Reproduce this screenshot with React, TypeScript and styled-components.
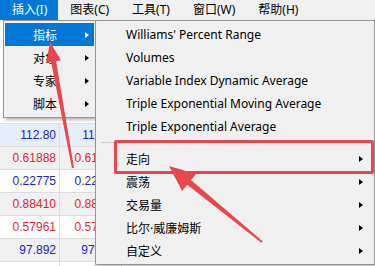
import React from "react";
import styled, { createGlobalStyle } from "styled-components";

const GlobalStyle = createGlobalStyle`
  html, body { margin: 0; padding: 0; background: #ffffff; }
  body { overflow: hidden; }
  * { box-sizing: border-box; }
`;

const UI_FONT = `"Noto Sans", "Noto Sans CJK SC", sans-serif`;

const Page = styled.div`
  position: relative;
  width: 375px;
  height: 266px;
  overflow: hidden;
  font-family: ${UI_FONT};
  font-size: 12px;
  color: #000;
  background: #fff;
`;

const MenuBar = styled.div`
  display: flex;
  height: 20px;
  background: #f0f0f0;
`;

const BarItem = styled.div<{ $active?: boolean }>`
  display: flex;
  align-items: center;
  padding: 0 11px 0 12px;
  height: 20px;
  line-height: 20px;
  white-space: nowrap;
  background: ${(p) => (p.$active ? "#0078d7" : "transparent")};
  color: ${(p) => (p.$active ? "#fff" : "#000")};
`;

const Body = styled.div`
  display: flex;
  flex-direction: column;
`;

const ChartArea = styled.div`
  height: 103px;
  background: #fff;
`;

const Row = styled.div<{ $bg: string }>`
  display: grid;
  grid-template-columns: 60px 62px 1fr;
  height: 23px;
  background: ${(p) => p.$bg};
  border-top: 1px solid #dcdcdc;
`;

const Cell = styled.div<{ $color: string }>`
  display: flex;
  align-items: center;
  justify-content: flex-end;
  padding-right: 3px;
  border-right: 1px solid #dcdcdc;
  font-family: "Liberation Sans", sans-serif;
  font-size: 12px;
  color: ${(p) => p.$color};
`;

const Menu = styled.div<{ $left: number; $width: number }>`
  position: absolute;
  top: 20px;
  left: ${(p) => p.$left}px;
  width: ${(p) => p.$width}px;
  padding: 2px 1px;
  background: #f0f0f0;
  border: 1px solid #979797;
  box-shadow: 2px 2px 3px rgba(0, 0, 0, 0.28);
  display: flex;
  flex-direction: column;
`;

const MenuItem = styled.div<{ $active?: boolean; $pad: number; $arrowPad: number }>`
  display: flex;
  align-items: center;
  justify-content: space-between;
  height: 23px;
  padding: 0 ${(p) => p.$arrowPad}px 0 ${(p) => p.$pad}px;
  white-space: nowrap;
  background: ${(p) => (p.$active ? "#0078d7" : "transparent")};
  color: ${(p) => (p.$active ? "#fff" : "#000")};
`;

const Tri = styled.span<{ $white?: boolean }>`
  width: 0;
  height: 0;
  border-top: 3.5px solid transparent;
  border-bottom: 3.5px solid transparent;
  border-left: 4px solid ${(p) => (p.$white ? "#fff" : "#000")};
`;

const Separator = styled.div`
  height: 9px;
  display: flex;
  align-items: center;
  padding: 0 2px 0 4px;
  &::after {
    content: "";
    flex: 1;
    height: 1px;
    background: #c9c9c9;
  }
`;

const Highlight = styled.div`
  position: absolute;
  left: 114px;
  top: 140px;
  width: 260px;
  height: 34px;
  border: 3px solid #e8474d;
  border-radius: 2px;
  pointer-events: none;
`;

const Overlay = styled.svg`
  position: absolute;
  left: 0;
  top: 0;
  pointer-events: none;
`;

type Pt = [number, number];

function arrowPoints(tail: Pt, tip: Pt, headLen: number, headW: number, w0: number, w1: number) {
  const dx = tip[0] - tail[0];
  const dy = tip[1] - tail[1];
  const len = Math.hypot(dx, dy);
  const ux = dx / len;
  const uy = dy / len;
  const nx = -uy;
  const ny = ux;
  const bx = tip[0] - ux * headLen;
  const by = tip[1] - uy * headLen;
  const pts: Pt[] = [
    [tail[0] + (nx * w0) / 2, tail[1] + (ny * w0) / 2],
    [bx + (nx * w1) / 2, by + (ny * w1) / 2],
    [bx + (nx * headW) / 2, by + (ny * headW) / 2],
    tip,
    [bx - (nx * headW) / 2, by - (ny * headW) / 2],
    [bx - (nx * w1) / 2, by - (ny * w1) / 2],
    [tail[0] - (nx * w0) / 2, tail[1] - (ny * w0) / 2],
  ];
  return pts.map((p) => `${p[0].toFixed(1)},${p[1].toFixed(1)}`).join(" ");
}

const rows = [
  { v: "112.80", c: "#2222c4", bg: "#e5effa" },
  { v: "0.61888", c: "#e0272b", bg: "#f0f0f0" },
  { v: "0.22775", c: "#2222c4", bg: "#ffffff" },
  { v: "0.88410", c: "#e0272b", bg: "#f0f0f0" },
  { v: "0.57961", c: "#e0272b", bg: "#ffffff" },
  { v: "97.892", c: "#2222c4", bg: "#f0f0f0" },
  { v: "1.07688", c: "#e0272b", bg: "#ffffff" },
];

const topMenu = ["插入(I)", "图表(C)", "工具(T)", "窗口(W)", "帮助(H)"];
const firstMenu = ["指标", "对象", "专家", "脚本"];
const indicators = [
  "Williams' Percent Range",
  "Volumes",
  "Variable Index Dynamic Average",
  "Triple Exponential Moving Average",
  "Triple Exponential Average",
];
const groups = ["走向", "震荡", "交易量", "比尔·威廉姆斯", "自定义"];

export default function App() {
  return (
    <Page>
      <GlobalStyle />
      <MenuBar>
        {topMenu.map((t, i) => (
          <BarItem key={t} $active={i === 0}>
            {t}
          </BarItem>
        ))}
      </MenuBar>
      <Body>
        <ChartArea />
        {rows.map((r) => (
          <Row key={r.v} $bg={r.bg}>
            <Cell $color={r.c}>{r.v}</Cell>
            <Cell $color={r.c}>{r.v}</Cell>
          </Row>
        ))}
      </Body>

      <Menu $left={3} $width={93}>
        {firstMenu.map((t, i) => (
          <MenuItem key={t} $active={i === 0} $pad={28} $arrowPad={5}>
            <span>{t}</span>
            <Tri $white={i === 0} />
          </MenuItem>
        ))}
      </Menu>

      <Menu $left={95} $width={280}>
        {indicators.map((t) => (
          <MenuItem key={t} $pad={29} $arrowPad={10}>
            <span>{t}</span>
          </MenuItem>
        ))}
        <Separator />
        {groups.map((t) => (
          <MenuItem key={t} $pad={29} $arrowPad={10}>
            <span>{t}</span>
            <Tri />
          </MenuItem>
        ))}
      </Menu>

      <Highlight />
      <Overlay width="375" height="266" viewBox="0 0 375 266">
        <polygon points={arrowPoints([73, 168], [50, 42], 20, 15, 2, 5)} fill="#e8474d" />
        <polygon points={arrowPoints([262, 242], [169, 166], 26, 22, 2, 6)} fill="#e8474d" />
      </Overlay>
    </Page>
  );
}
